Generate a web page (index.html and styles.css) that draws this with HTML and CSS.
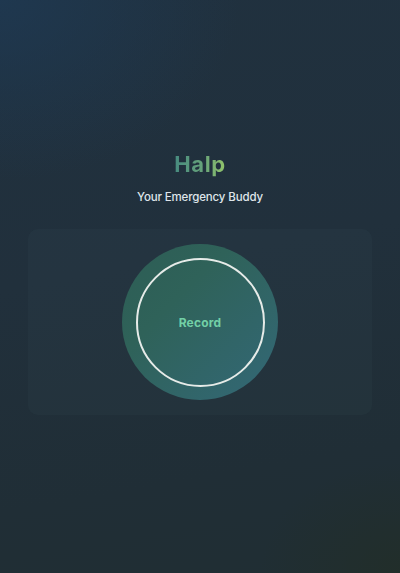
FILE: index.html
```html
<!DOCTYPE html>
<html lang="en">
<head>
<meta charset="utf-8">
<title>Halp</title>
<link rel="stylesheet" href="styles.css">
</head>
<body>
<main class="app">
  <header class="brand">
    <h1 class="title">Halp</h1>
    <p class="subtitle">Your Emergency Buddy</p>
  </header>
  <section class="card">
    <button class="record" type="button">
      <span class="ring"><span class="label">Record</span></span>
    </button>
  </section>
</main>
</body>
</html>
```

FILE: styles.css
```css
* { box-sizing: border-box; }
html, body { margin: 0; padding: 0; height: 100%; }
body {
  font-family: Inter, "Noto Sans", sans-serif;
  background:
    radial-gradient(ellipse 240px 180px at 0 0, rgba(30, 60, 90, 0.6), rgba(30, 60, 90, 0) 100%),
    radial-gradient(ellipse 140px 110px at 100% 100%, rgba(34, 46, 40, 0.8), rgba(34, 46, 40, 0) 100%),
    linear-gradient(170deg, #20313f 0%, #21303c 45%, #202e36 80%, #202e33 100%);
  min-height: 573px;
  color: #e3e8ec;
}
.app {
  display: flex;
  flex-direction: column;
  align-items: center;
  padding: 149px 28px 0;
}
.brand {
  display: flex;
  flex-direction: column;
  align-items: center;
}
.title {
  margin: 0;
  font-size: 22px;
  font-weight: 700;
  line-height: 30px;
  letter-spacing: 0.6px;
  background: linear-gradient(90deg, #478b80 0%, #66a27a 55%, #93c56a 100%);
  -webkit-background-clip: text;
  background-clip: text;
  color: transparent;
}
.subtitle {
  margin: 10px 0 0;
  font-size: 11.5px;
  font-weight: 500;
  line-height: 16px;
  letter-spacing: -0.15px;
  color: #dfe5ea;
}
.card {
  margin-top: 24px;
  width: 344px;
  height: 186px;
  border-radius: 10px;
  background: rgba(110, 160, 170, 0.045);
  display: flex;
  align-items: center;
  justify-content: center;
}
.record {
  width: 156px;
  height: 156px;
  border-radius: 50%;
  border: none;
  padding: 0;
  background: linear-gradient(135deg, #2d5d55 0%, #2f6259 35%, #336877 100%);
  display: flex;
  align-items: center;
  justify-content: center;
  cursor: pointer;
}
.ring {
  width: 129px;
  height: 129px;
  border-radius: 50%;
  border: 2.5px solid #e6ebe8;
  display: flex;
  align-items: center;
  justify-content: center;
}
.label {
  font-family: Inter, "Noto Sans", sans-serif;
  font-size: 12px;
  font-weight: 700;
  color: #72d0a6;
  letter-spacing: 0.2px;
}
```
